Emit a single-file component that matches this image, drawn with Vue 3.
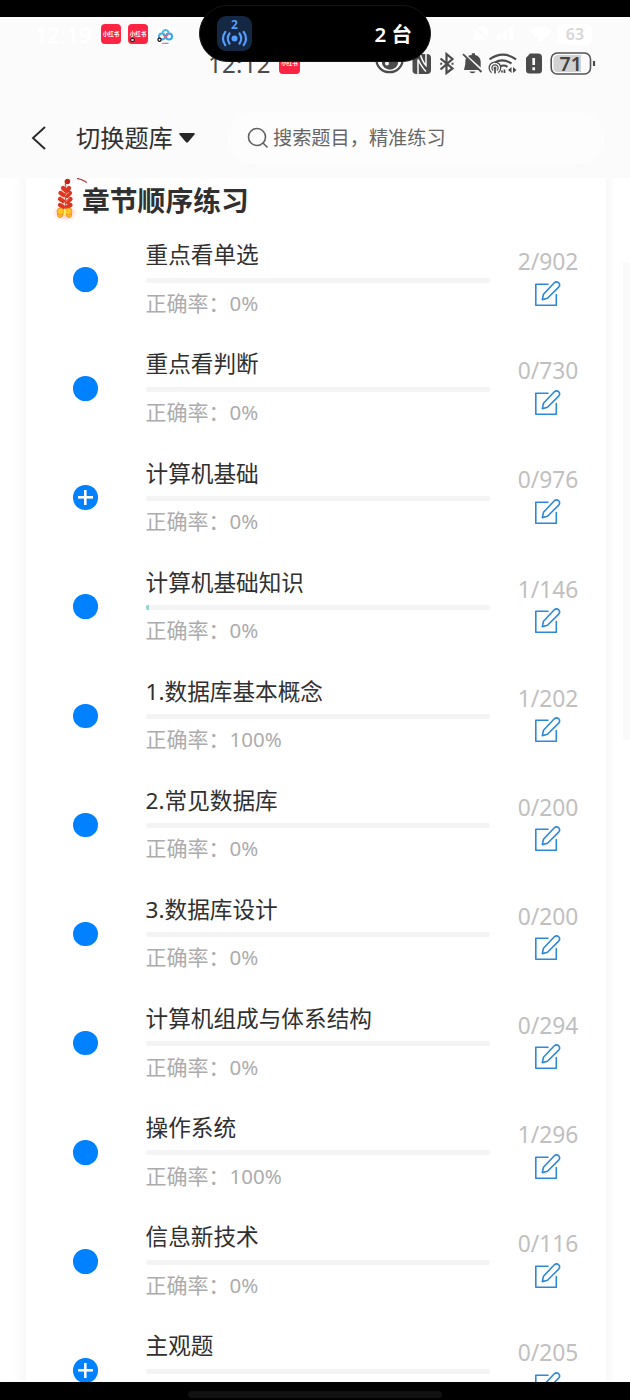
<script setup>
const chapters = [
  { title: '重点看单选', rate: '0%', count: '2/902', done: 0 },
  { title: '重点看判断', rate: '0%', count: '0/730', done: 0 },
  { title: '计算机基础', rate: '0%', count: '0/976', done: 0, plus: true },
  { title: '计算机基础知识', rate: '0%', count: '1/146', done: 1 },
  { title: '1.数据库基本概念', rate: '100%', count: '1/202', done: 0 },
  { title: '2.常见数据库', rate: '0%', count: '0/200', done: 0 },
  { title: '3.数据库设计', rate: '0%', count: '0/200', done: 0 },
  { title: '计算机组成与体系结构', rate: '0%', count: '0/294', done: 0 },
  { title: '操作系统', rate: '100%', count: '1/296', done: 0 },
  { title: '信息新技术', rate: '0%', count: '0/116', done: 0 },
  { title: '主观题', count: '0/205', done: 0, plus: true },
]
</script>

<template>
  <div class="screen">
    <div class="top-strip"></div>
    <header class="header">
      <div class="outer-status">
        <span class="outer-time">12:19</span>
        <span class="app-icon">小红书</span>
        <span class="app-icon second">小红书<i></i></span>
        <svg class="cloud" width="18" height="18" viewBox="0 0 18 18">
          <rect width="18" height="18" rx="3" fill="#fff" />
          <g fill="none" stroke-width="2">
            <circle cx="5" cy="9.5" r="3" stroke="#45aee6" />
            <circle cx="12" cy="9.5" r="3" stroke="#2fa7e8" />
            <path d="M5.8 7.2a3 3 0 1 1 5.6 0" stroke="#4bb7e7" />
            <path d="M6 7.5l2.5 2.5 3-3" stroke="#ed6470" stroke-width="1.6" />
          </g>
          <circle cx="2.5" cy="12.7" r="1.6" fill="#fff" stroke="#111" stroke-width="1.2" />
          <path d="M5 16.3h3" stroke="#ef7773" stroke-width="1.2" /><path d="M8 16.3h3.5" stroke="#5795e8" stroke-width="1.2" />
        </svg>
        <svg class="faint" width="86" height="24" viewBox="0 0 86 24">
          <g fill="#fff">
            <path d="M3 18h14L5 7q-1 2-1 6zM7 5l11 10V10q0-5-5-6zM27 18v-5h4v5zm6 0V9h4v9zm6 0V5h4v13zM60 9q11-9 22 0l-11 11z" />
          </g>
        </svg>
        <span class="outer-battery">63</span>
      </div>
      <div class="inner-status">
        <span class="inner-time">12:12</span>
        <span class="app-icon inner-app">小红书</span>
        <svg class="status-icons" width="224" height="26" viewBox="0 0 224 26">
          <g fill="none" stroke="#4b4b4b">
            <ellipse cx="19.500" cy="9" rx="13" ry="12.200" stroke-width="2.200" />
            <circle cx="20" cy="10.500" r="8.300" fill="#4b4b4b" stroke="none" />
            <circle cx="17" cy="12.500" r="2" fill="#fbfbfb" stroke="none" />
            <rect x="42.500" y="3" width="18.500" height="20" rx="4" fill="#4b4b4b" stroke="none" />
            <path d="M48 23V8.500q4 8 8 12M50 2.500q2.500 8.500 6 12V3" stroke="#fbfbfb" stroke-width="1.500" />
            <path d="M70.500 7.500l12 10-6 4.500V3l6 5-12 10.500" stroke-width="2.200" />
            <path d="M70.200 12.700h2M81.500 12.700h2" stroke-width="2" />
          </g>
          <path fill="#4b4b4b" d="M94 19h15.500L96.100 7c-.8 1.700-.8 3.500-.8 6zM98 4.900L110.700 16.500V11c0-3.800-2.500-6.200-5.700-6.900V2.200h-3.200v1.900c-1.400.1-2.700.4-3.800.8zM99.500 20.500h6c-.6 2.300-5.400 2.300-6 0z" />
          <path d="M93 3.200l18.500 17.800" stroke="#4b4b4b" stroke-width="1.800" />
          <g fill="none" stroke="#4b4b4b">
            <path d="M119.500 8.400q13.500-9.500 26.500 0" stroke-width="2.200" />
            <path d="M125 11.300q8-4.300 16.500 1.200" stroke-width="2.100" />
            <path d="M130.500 15q4-1.200 7 .8" stroke-width="2" />
            <path d="M121.600 21.600a5.800 5.800 0 1 1 6.700 0" stroke-width="1.300" />
            <path d="M123.200 19.400a3.100 3.100 0 1 1 3.600 0" stroke-width="1.200" />
            <circle cx="125" cy="17" r="1" fill="#4b4b4b" />
            <path d="M125 17v5.500M132 19.500v2M134.500 18.500v3.500" stroke-width="1.700" />
          </g>
          <path d="M141.500 16v6l-3.500-3zM143 16v6l3.500-3z" fill="#4b4b4b" />
          <path d="M160 2.500h8q4 0 4 4V19q0 3.500-3.500 3.500h-9q-3.500 0-3.500-3.500V7z" fill="#4b4b4b" />
          <path d="M163.700 7v7M163.700 16.200v3" stroke="#fbfbfb" stroke-width="2.700" />
          <rect x="181.200" y="2" width="39.300" height="21" rx="6" fill="#fbfbfb" stroke="#555" stroke-width="1.600" />
          <path d="M188 4h23v17h-23q-4.500 0-4.500-4.500v-8Q183.500 4 188 4z" fill="#d2d2d2" />
          <path d="M224 10v5" stroke="#4b4b4b" stroke-width="2.200" />
          <text x="189.500" y="19.900" class="battery-text">71</text>
        </svg>
      </div>
      <nav class="navbar">
        <svg class="back" width="18" height="26" viewBox="0 0 18 26"><path d="M15 2L3 13l12 11" fill="none" stroke="#282828" stroke-width="1.900" /></svg>
        <span class="bank">切换题库</span>
        <svg class="caret" width="18" height="12" viewBox="0 0 18 12"><path d="M2 1h14q1.500 0 .5 1.500L10.200 10q-1.200 1.200-2.400 0L1.500 2.500Q.5 1 2 1z" fill="#282828" /></svg>
        <div class="search">
          <svg width="22" height="22" viewBox="0 0 22 22"><circle cx="10" cy="10" r="8.500" fill="none" stroke="#606060" stroke-width="1.600" /><path d="M16 16l4.500 4.500" stroke="#606060" stroke-width="1.600" /></svg>
          <span>搜索题目，精准练习</span>
        </div>
      </nav>
      <div class="island">
        <svg width="35" height="35" viewBox="0 0 35 35">
          <rect width="35" height="35" rx="9" fill="#142843" />
          <circle cx="17.500" cy="22.500" r="3" fill="#559dff" />
          <g fill="none" stroke="#559dff" stroke-width="2.200" stroke-linecap="round">
            <path d="M12.500 17.500q-3.500 5 0 10M8.300 15.800q-4.500 6.700 0 13.400M22.500 17.500q3.500 5 0 10M26.700 15.800q4.500 6.700 0 13.400" />
          </g>
          <text x="17.500" y="13.300" class="device-count">2</text>
        </svg>
        <span>2 台</span>
      </div>
    </header>

    <main class="content">
      <section class="card">
        <h1 class="heading">
          <svg width="34" height="44" viewBox="0 0 34 44">
            <defs><radialGradient id="glow"><stop offset=".3" stop-color="#f2503f" stop-opacity=".28" /><stop offset="1" stop-color="#f2503f" stop-opacity="0" /></radialGradient></defs>
            <ellipse cx="12" cy="35" rx="13" ry="9" fill="url(#glow)" />
            <path d="M12.500 2v33" stroke="#c96c32" stroke-width="1.500" />
            <circle cx="14.500" cy="3.500" r="2.700" fill="#c92218" />
            <path d="M24 .5q4 .3 10 4" fill="none" stroke="#b84143" stroke-width="1.300" />
            <g stroke="#df3523" stroke-width="4.300" stroke-linecap="round">
              <path d="M10 10l2 2M16 10l-2 3M7.500 15l3 2M17 15l-3 3M7 21l3 2M17.500 21l-3 3M7 27l3 2M17.500 27l-3 2" />
            </g>
            <path d="M8 12l4 3m4-1l-4 4m-5 0l4 3m5-1l-3 4m-5 0l3 3" stroke="#f3a07a" stroke-width=".8" />
            <g fill="#ffc526" stroke="#ed781f" stroke-width=".7"><circle cx="7" cy="37" r="2.500" /><circle cx="16" cy="37" r="2.500" /><circle cx="7.500" cy="33.500" r="3.500" /><circle cx="15.500" cy="33.500" r="3.500" /></g>
            <path d="M11.800 31v6" stroke="#fff06a" stroke-width="2" />
          </svg>
          <span>章节顺序练习</span>
        </h1>
        <ul class="list">
          <li v-for="item in chapters" :key="item.title" class="row">
            <span class="dot" :class="{ plus: item.plus }"></span>
            <div class="info">
              <div class="title">{{ item.title }}</div>
              <div class="track"><div class="fill" :style="{ width: item.done + '%' }"></div></div>
              <div v-if="item.rate" class="rate"><span>正确率：</span><span class="pct">{{ item.rate }}</span></div>
            </div>
            <div class="action">
              <span class="count">{{ item.count }}</span>
              <svg width="28" height="28" viewBox="0 0 28 28" fill="none" stroke="#2d88d6" stroke-width="1.600" stroke-linejoin="round" stroke-linecap="round">
                <path d="M15 5.200H2.800v21h20.500V15.500" />
                <path d="M9.300 20.600l1.200-5.300L21.300 3.800q2.100-1.900 4.300-.1 2 2.100.1 4.400L14.500 19.300z" />
              </svg>
            </div>
          </li>
        </ul>
      </section>
      <aside class="next-card"></aside>
    </main>
    <footer class="bottom"><div class="handle"></div></footer>
  </div>
</template>

<style>
body { margin: 0; overflow: hidden; }
</style>

<style scoped>
.screen { width: 630px; height: 1400px; display: flex; flex-direction: column; overflow: hidden; background: #fff; font-family: "Noto Sans", "Noto Sans CJK SC", sans-serif; color: #303030; }
.top-strip { height: 17px; background: #000; flex: none; }
.header { position: relative; height: 161px; flex: none; display: flex; flex-direction: column; background: #fbfbfb; }
.outer-status { height: 34px; box-sizing: border-box; padding-left: 35px; display: flex; align-items: center; }
.outer-time { width: 66px; flex: none; color: #fff; font: 600 22px/34px "Noto Sans", sans-serif; }
.app-icon { position: relative; width: 20px; height: 20px; flex: none; border-radius: 4px; background: #ff2442; color: #fff; font: 700 5.500px/20px "Noto Sans CJK SC", sans-serif; text-align: center; white-space: nowrap; }
.second { margin-left: 7px; }
.second i { position: absolute; left: 2px; bottom: 2px; width: 3px; height: 2px; border: 1px solid #111; border-radius: 50%; background: #ddd; }
.cloud { margin-left: 9px; flex: none; margin-top: 4px; }
.faint { margin-left: 295px; flex: none; }
.outer-battery { width: 34px; height: 21px; flex: none; margin-left: 2px; border-radius: 5px; background: #fff; color: #d7d7d7; font: 600 16px/21px "Noto Sans", sans-serif; text-align: center; }
.inner-status { height: 26px; display: flex; align-items: center; padding-left: 208px; }
.inner-time { width: 70px; flex: none; color: #4b4b4b; font: 400 24px/26px "Noto Sans", sans-serif; letter-spacing: .3px; }
.inner-app { width: 21px; height: 21px; margin-left: 1px; margin-bottom: 2px; }
.status-icons { margin-left: 70px; flex: none; overflow: visible; }
.battery-text { font: 600 19.500px "Noto Sans", sans-serif; fill: #444; }
.navbar { height: 101px; flex: none; display: flex; align-items: center; padding: 21px 26px 0 30px; box-sizing: border-box; }
.back { flex: none; }
.bank { margin-left: 28px; width: 98px; flex: none; font-size: 24.200px; line-height: 36px; white-space: nowrap; }
.caret { margin-left: 4px; flex: none; }
.search { height: 52px; margin-left: 32px; flex: 1; box-sizing: border-box; padding-left: 19px; display: flex; align-items: center; border-radius: 26px; background: #fdfdfd; color: #666; font-size: 19.200px; white-space: nowrap; }
.search svg { flex: none; }
.search span { margin-left: 4px; line-height: 28px; }
.island { position: absolute; left: 199px; top: -12px; width: 232px; height: 57px; box-sizing: border-box; padding: 0 18px 0 17px; border: 1px solid #151515; border-radius: 29px; background: #000; display: flex; align-items: center; justify-content: space-between; color: #fff; font: 600 20.500px/30px "Noto Sans", "Noto Sans CJK SC", sans-serif; }
.device-count { font: 700 12px "Noto Sans", sans-serif; fill: #559dff; text-anchor: middle; }
.content { height: 1204px; flex: none; display: flex; justify-content: space-between; overflow: hidden; background: linear-gradient(90deg, #fff 0 14px, #f8f8f8 26px 606px, #fff 616px); }
.card { width: 580px; margin-left: 26px; height: 1204px; overflow: hidden; background: #fff; }
.next-card { width: 7px; height: 478px; margin-top: 84px; background: #fafafa; }
.heading { height: 55px; margin: 0; padding-left: 27px; display: flex; align-items: flex-start; font: 700 27.800px/42px "Noto Sans CJK SC", sans-serif; white-space: nowrap; }
.heading svg { flex: none; }
.heading span { margin-left: -5px; }
.list { list-style: none; margin: 0; padding: 0; }
.row { height: 109.100px; display: grid; grid-template-columns: 119.500px 344.500px 1fr; }
.dot { width: 24.600px; height: 24.600px; margin: 34.200px 0 0 47.300px; border-radius: 50%; background: #0081ff; }
.plus { background: linear-gradient(#fff, #fff) center / 15px 2.600px no-repeat, linear-gradient(#fff, #fff) center / 2.600px 15px no-repeat, #0081ff; }
.title { height: 34px; margin-top: 5.400px; font-size: 22.650px; line-height: 34px; white-space: nowrap; }
.track { height: 5px; margin-top: 5.300px; border-radius: 2px; background: #f4f4f4; overflow: hidden; }
.fill { height: 5px; background: #8fd5d1; }
.rate { display: flex; height: 30px; margin-top: 5.200px; color: #acacac; font-size: 21px; line-height: 30px; white-space: nowrap; }
.pct { font-size: 20.500px; }
.action { display: flex; flex-direction: column; align-items: center; padding-top: 14.300px; }
.count { height: 30px; color: #c0c0c0; font-size: 22.800px; line-height: 30px; }
.action svg { margin: 1.500px 2px 0 0; }
.bottom { height: 18px; flex: none; background: #000; display: flex; justify-content: center; }
.handle { width: 254px; height: 7px; margin-top: 9px; border-radius: 4px; background: #111; }
</style>
